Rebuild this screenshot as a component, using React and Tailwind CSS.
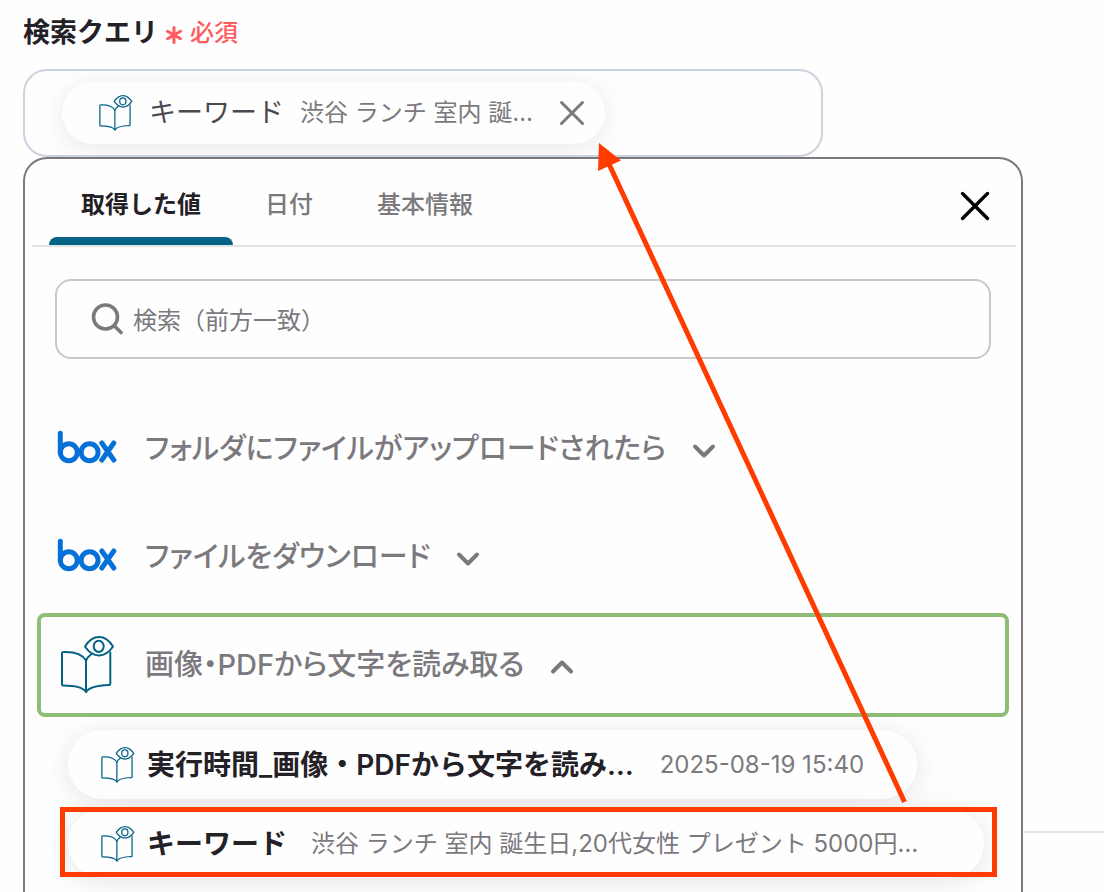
import React, { useState } from 'react';
import { Asterisk, ChevronDown, ChevronUp, X } from 'lucide-react';

const TABS = ['取得した値', '日付', '基本情報'];

const OUTPUTS = [
    { name: '実行時間_画像・PDFから文字を読み…', value: '2025-08-19 15:40', pad: 'gap-[26px] pr-[53px]' },
    { name: 'キーワード', value: '渋谷 ランチ 室内 誕生日,20代女性 プレゼント 5000円…', pad: 'gap-6 pr-[66px]' },
];

function BookEyeIcon({ className, strokeWidth = 2 }) {
    return (
        <svg viewBox="0 0 56 60" className={className} fill="none" stroke="#046285" strokeWidth={strokeWidth} strokeLinejoin="round" strokeLinecap="round" aria-hidden="true">
            <path d="M27 57C24 52 15 50.500 4 50.500Q3 50.500 3 49.500V18Q3 17 4 17C15 16.500 23 18.500 27 25.500Z" />
            <path d="M27 25.500Q28.500 22 32 19.500M27 57C30 52 39 50.500 50 50Q51.300 50 51.300 49V17.500" />
            <path d="M26 11.500C30 5 34.500 2 40 2C45.500 2 50 5 54 11.500C50 17.500 45.500 20.500 40 20.500C34.500 20.500 30 17.500 26 11.500Z" />
            <ellipse cx="39.700" cy="11.300" rx="5" ry="5.600" />
        </svg>
    );
}

function BoxLogo() {
    return (
        <svg viewBox="0 0 60 34" className="w-[60px] h-[34px] mb-1" fill="none" stroke="#0571d8" strokeWidth="5" strokeLinecap="round" role="img" aria-label="box">
            <path d="M3.300 3.300V22" />
            <circle cx="11.800" cy="22.200" r="8.500" />
            <circle cx="32.600" cy="22.200" r="8.500" />
            <path d="M44.800 13L56.800 30M56.800 13L44.800 30" />
        </svg>
    );
}

function SearchIcon() {
    return (
        <svg viewBox="0 0 32 32" className="size-8 shrink-0" fill="none" stroke="#7b797d" strokeWidth="3.600" strokeLinecap="round" aria-hidden="true">
            <circle cx="14.500" cy="14" r="12" />
            <path d="M23.500 23L30 29.500" />
        </svg>
    );
}

function StepRow({ icon, label, open, className }) {
    const Chevron = open ? ChevronUp : ChevronDown;
    return (
        <button type="button" aria-expanded={!!open} className={`flex items-center mx-3 text-left text-[#7b797d] ${className}`}>
            <span className="w-[60px] mr-7 flex justify-center shrink-0">{icon}</span>
            <span className="text-[29px] leading-10 font-medium [font-feature-settings:'palt']">{label}</span>
            <Chevron size={36} strokeWidth={4} absoluteStrokeWidth className="ml-5 mt-1" />
        </button>
    );
}

function OutputChip({ name, value, pad }) {
    return (
        <button type="button" className={`flex items-center h-[69px] pl-8 rounded-full bg-[#fefefe] whitespace-nowrap shadow-[0_4px_24px_rgba(60,40,70,0.12)] ${pad}`}>
            <span className="flex items-center gap-3">
                <BookEyeIcon className="w-[35px] h-[38px] shrink-0" />
                <span className="text-[28px] font-semibold text-[#232126]">{name}</span>
            </span>
            <span className="text-2xl text-[#7b797d]">{value}</span>
        </button>
    );
}

export default function App() {
    const [tab, setTab] = useState(0);

    return (
        <main lang="ja" className="relative min-h-screen flex flex-col overflow-hidden pl-[23px] pr-[81px] pt-[13px] bg-[#fefefe] font-[Inter,'Noto_Sans_CJK_JP',sans-serif]">
            <hr className="absolute left-1/2 right-0 top-[831px] border-t-2 border-[#e5e4e6]" />

            <h1 className="flex items-center gap-px mb-4 h-10 text-[27px] font-semibold text-[#232126]">
                検索クエリ
                <Asterisk size={30} strokeWidth={3} absoluteStrokeWidth className="text-[#ff5a5f] mt-1" />
                <span className="text-2xl font-medium text-[#ff5a5f]">必須</span>
            </h1>

            <div className="flex w-4/5 h-[88px] pl-[37px] pt-[11px] border-2 border-[#ccd3e0] rounded-3xl overflow-hidden">
                <div className="flex items-center h-[62px] pl-9 pr-3 rounded-full bg-[#fefefe] whitespace-nowrap shadow-[0_4px_24px_rgba(60,40,70,0.10)]">
                    <BookEyeIcon className="w-[35px] h-[38px] shrink-0" />
                    <span className="ml-4 text-[27px] text-[#4b494e]">キーワード</span>
                    <span className="ml-4 text-2xl text-[#7b797d]">渋谷 ランチ 室内 誕…</span>
                    <button type="button" aria-label="キーワードを削除" className="ml-[18px] text-[#7b797d]">
                        <X size={42} strokeWidth={3} absoluteStrokeWidth />
                    </button>
                </div>
            </div>

            <section className="relative flex-1 flex flex-col border-2 border-b-0 border-[#7b797d] rounded-t-3xl bg-[#fefefe]">
                <div className="flex items-stretch h-[88px] ml-[7px] mr-[5px] pl-[17px] pr-4 border-b-2 border-[#e3e2e4]">
                    <div role="tablist" className="flex">
                        {TABS.map((label, i) => (
                            <button
                                key={label}
                                type="button"
                                role="tab"
                                aria-selected={tab === i}
                                onClick={() => setTab(i)}
                                className={`relative px-8 pt-1.5 text-2xl ${tab === i ? 'font-semibold text-[#232126]' : 'font-medium text-[#7b797d]'}`}
                            >
                                {label}
                                {tab === i && <span className="absolute inset-x-0 bottom-0 h-2 rounded-t-lg bg-[#046285]" />}
                            </button>
                        ))}
                    </div>
                    <button type="button" aria-label="閉じる" className="ml-auto pt-2 text-black">
                        <X size={50} strokeWidth={3.4} absoluteStrokeWidth />
                    </button>
                </div>

                <label className="flex items-center gap-2.5 h-20 mx-[30px] mt-8 pl-[34px] pr-8 border-2 border-[#c8c7ca] rounded-2xl">
                    <SearchIcon />
                    <input
                        type="text"
                        aria-label="検索"
                        placeholder="検索（前方一致）"
                        className="flex-1 min-w-0 pt-1 text-2xl text-[#232126] placeholder:text-[#7b797d] outline-none"
                    />
                </label>

                <div className="flex flex-col mt-9">
                    <StepRow icon={<BoxLogo />} label="フォルダにファイルがアップロードされたら" className="h-[108px] pl-5" />
                    <StepRow icon={<BoxLogo />} label="ファイルをダウンロード" className="h-[108px] pl-5" />
                    <StepRow
                        icon={<BookEyeIcon className="w-14 h-[60px]" />}
                        label="画像・PDFから文字を読み取る"
                        open
                        className="h-[104px] mt-0.5 pl-4 border-4 border-[#8ebd76] rounded-lg"
                    />
                </div>

                <div className="relative flex flex-col items-start gap-2.5 ml-[43px] mt-[13px] pb-4">
                    {OUTPUTS.map((o) => (
                        <OutputChip key={o.name} {...o} />
                    ))}
                </div>
            </section>

            {/* callout frame and arrow over the selected value */}
            <div className="absolute left-[60px] right-[107px] top-[807px] h-[70px] border-[5px] border-[#ff3b00] pointer-events-none" />
            <svg viewBox="0 0 320 670" className="absolute left-[590px] top-[140px] w-[320px] h-[670px] pointer-events-none" aria-hidden="true">
                <path d="M19 24L314.500 662" stroke="#ff3b00" strokeWidth="5" />
                <path d="M9 3L31 20.500L8 31Z" fill="#ff3b00" />
            </svg>
        </main>
    );
}
